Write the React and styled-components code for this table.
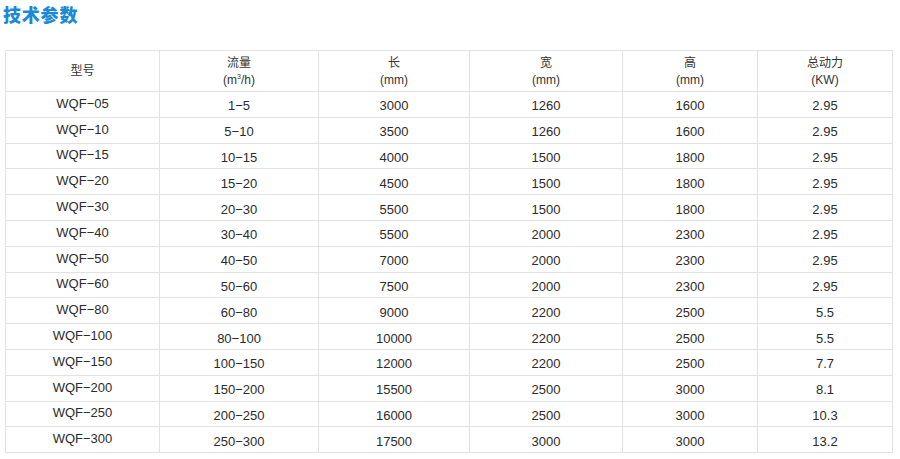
import React from 'react'
import styled, { createGlobalStyle } from 'styled-components'

const Global = createGlobalStyle`
  body {
    margin: 0;
    background: #fff;
    font-family: "Liberation Sans", Arial, "Noto Sans CJK SC", sans-serif;
    color: #333;
  }
`

const Page = styled.div`
  padding: 2px 0 0 3px;
`

const Title = styled.h2`
  margin: 0 0 24px 0;
  font-family: "Noto Sans CJK SC", sans-serif;
  font-size: 18px;
  line-height: 24px;
  font-weight: 900;
  color: #1a8ad6;
  letter-spacing: 0.8px;
`

const Table = styled.table`
  margin-left: 2px;
  width: 887px;
  border-collapse: collapse;
  table-layout: fixed;
  font-size: 13px;
`

const HeadRow = styled.tr`
  height: 41px;
`

const Row = styled.tr`
  height: 25.8px;
`

const Th = styled.th`
  width: ${p => p.$w}px;
  border: 1px solid #e2e2e2;
  font-weight: normal;
  font-size: 12px;
  line-height: 17px;
  color: #333;
  padding: 1px 0 0 0;
  text-align: center;
  vertical-align: middle;
  font-family: "Liberation Sans", Arial, "Noto Sans CJK SC", sans-serif;
`

const Td = styled.td`
  border: 1px solid #e2e2e2;
  text-align: center;
  vertical-align: middle;
  padding: ${p => (p.$first ? '0 0 2px 0' : '3px 0 0 0')};
  line-height: 15px;
  color: #2b2b2b;
`

const Sup = styled.sup`
  font-size: 7px;
  vertical-align: 5px;
  line-height: 0;
`

const cols = [
  { w: 153, label: '型号' },
  { w: 158, label: '流量', unit: <>(m<Sup>3</Sup>/h)</> },
  { w: 150, label: '长', unit: '(mm)' },
  { w: 152, label: '宽', unit: '(mm)' },
  { w: 134, label: '高', unit: '(mm)' },
  { w: 134, label: '总动力', unit: '(KW)' },
]

const rows = [
  ['WQF−05', '1−5', '3000', '1260', '1600', '2.95'],
  ['WQF−10', '5−10', '3500', '1260', '1600', '2.95'],
  ['WQF−15', '10−15', '4000', '1500', '1800', '2.95'],
  ['WQF−20', '15−20', '4500', '1500', '1800', '2.95'],
  ['WQF−30', '20−30', '5500', '1500', '1800', '2.95'],
  ['WQF−40', '30−40', '5500', '2000', '2300', '2.95'],
  ['WQF−50', '40−50', '7000', '2000', '2300', '2.95'],
  ['WQF−60', '50−60', '7500', '2000', '2300', '2.95'],
  ['WQF−80', '60−80', '9000', '2200', '2500', '5.5'],
  ['WQF−100', '80−100', '10000', '2200', '2500', '5.5'],
  ['WQF−150', '100−150', '12000', '2200', '2500', '7.7'],
  ['WQF−200', '150−200', '15500', '2500', '3000', '8.1'],
  ['WQF−250', '200−250', '16000', '2500', '3000', '10.3'],
  ['WQF−300', '250−300', '17500', '3000', '3000', '13.2'],
]

const App = () => {
  return (
    <Page>
      <Global />
      <Title>技术参数</Title>
      <Table>
        <thead>
          <HeadRow>
            {cols.map((c, i) => (
              <Th key={i} $w={c.w}>
                {c.label}
                {c.unit && <><br />{c.unit}</>}
              </Th>
            ))}
          </HeadRow>
        </thead>
        <tbody>
          {rows.map((r, i) => (
            <Row key={i}>
              {r.map((v, j) => (
                <Td key={j} $first={j === 0}>{v}</Td>
              ))}
            </Row>
          ))}
        </tbody>
      </Table>
    </Page>
  )
}

export default App
